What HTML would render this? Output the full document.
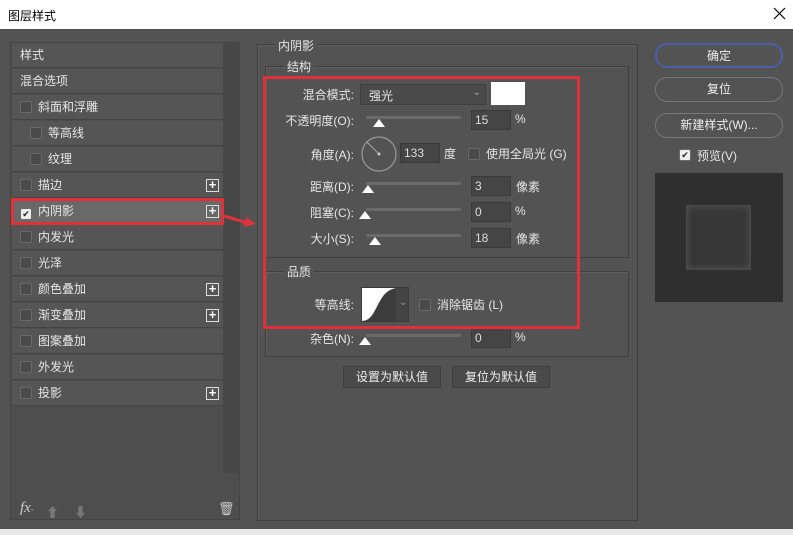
<!DOCTYPE html>
<html><head><meta charset="utf-8"><style>
*{box-sizing:border-box;margin:0;padding:0}
body{width:793px;height:535px;overflow:hidden;background:#535353;font-family:"Liberation Sans","Noto Sans CJK SC",sans-serif;font-size:12px;color:#e6e6e6;position:relative}
.a{position:absolute}
.title{left:0;top:0;width:793px;height:29px;background:#fff;color:#000;font-size:12px;padding:7px 0 0 8px}
.left{left:10px;top:42px;width:230px;height:478px;background:#4e4e4e;border:1px solid #444}
.item{position:absolute;left:1px;width:211px;height:25px;border-bottom:1px solid #444;background:#555;padding-left:8px;line-height:25px}
.cb{display:inline-block;width:12px;height:12px;border:1px solid #6a6a6a;background:#4a4a4a;vertical-align:-2px;margin-right:6px;border-radius:2px}
.plus{position:absolute;right:4px;top:6px;width:13px;height:13px;border:1px solid #ddd;color:#fff;font-size:13px;line-height:10px;text-align:center;font-weight:bold}
.grp{border:1px solid #3f3f3f;box-shadow:1px 1px 0 #5e5e5e inset}
.lbl{position:absolute;text-align:right;width:100px}
.inp{position:absolute;height:20px;width:40px;background:#454545;border:1px solid #3a3a3a;padding:2px 3px;color:#ddd}
.sl{position:absolute;height:3px;width:95px;background:#6a6a6a;border-radius:1px}
.th{position:absolute;width:0;height:0;border-left:6px solid transparent;border-right:6px solid transparent;border-bottom:8px solid #fff}
.btn{position:absolute;height:22px;background:#4a4a4a;border:1px solid #3e3e3e;text-align:center;line-height:20px;color:#eee}
.rb{position:absolute;left:655px;width:128px;height:25px;border:1px solid #777;border-radius:12px;text-align:center;line-height:23px;color:#eee}
</style></head><body>
<div class="a title">图层样式</div>
<svg class="a" style="left:773px;top:7px" width="13" height="13"><path d="M1 1L12 12M12 1L1 12" stroke="#000" stroke-width="1.2"/></svg>
<div class="a left">
<div class="a" style="left:212px;top:0;width:16px;height:430px;background:#474747"></div>
<div class="item" style="top:0">样式</div>
<div class="item" style="top:26px">混合选项</div>
<div class="item" style="top:52px"><span class="cb"></span>斜面和浮雕</div>
<div class="item" style="top:78px;padding-left:18px"><span class="cb"></span>等高线</div>
<div class="item" style="top:104px;padding-left:18px"><span class="cb"></span>纹理</div>
<div class="item" style="top:130px"><span class="cb"></span>描边<span class="plus">+</span></div>
<div class="item" style="top:156px;background:#696969;outline:3px solid #e0313a;outline-offset:-2px"><span class="cb" style="background:#eee;color:#222;font-size:9px;line-height:10px;text-align:center">✔</span>内阴影<span class="plus">+</span></div>
<div class="item" style="top:182px"><span class="cb"></span>内发光</div>
<div class="item" style="top:208px"><span class="cb"></span>光泽</div>
<div class="item" style="top:234px"><span class="cb"></span>颜色叠加<span class="plus">+</span></div>
<div class="item" style="top:260px"><span class="cb"></span>渐变叠加<span class="plus">+</span></div>
<div class="item" style="top:286px"><span class="cb"></span>图案叠加</div>
<div class="item" style="top:312px"><span class="cb"></span>外发光</div>
<div class="item" style="top:338px"><span class="cb"></span>投影<span class="plus">+</span></div>
<div class="a" style="left:9px;top:457px;font-style:italic;font-family:'Liberation Serif',serif;font-size:15px;color:#ccc">fx<span style="font-size:8px">-</span></div>
<div class="a" style="left:35px;top:459px;color:#777;font-size:13px">⬆</div>
<div class="a" style="left:63px;top:459px;color:#777;font-size:13px">⬇</div>
<div class="a" style="left:207px;top:458px;color:#ccc;font-size:13px">🗑</div>
</div>
<svg class="a" style="left:222px;top:212px" width="36" height="16"><path d="M2 4 L26 11" stroke="#e0313a" stroke-width="3"/><path d="M24 5 L34 12 L22 15 Z" fill="#e0313a"/></svg>
<div class="a grp" style="left:257px;top:44px;width:381px;height:477px"></div>
<div class="a" style="left:275px;top:37px;background:#535353;padding:0 3px">内阴影</div>
<div class="a grp" style="left:265px;top:66px;width:364px;height:192px"></div>
<div class="a" style="left:284px;top:58px;background:#535353;padding:0 3px">结构</div>
<div class="a grp" style="left:265px;top:271px;width:364px;height:86px"></div>
<div class="a" style="left:284px;top:263px;background:#535353;padding:0 3px">品质</div>
<div class="lbl" style="left:254px;top:86px">混合模式:</div>
<div class="a" style="left:360px;top:84px;width:126px;height:21px;background:#4a4a4a;border:1px solid #3e3e3e;padding:2px 8px">强光<span style="position:absolute;right:4px;top:2px;color:#aaa;font-size:10px">⌄</span></div>
<div class="a" style="left:491px;top:82px;width:34px;height:23px;background:#fff"></div>
<div class="lbl" style="left:254px;top:112px">不透明度(O):</div>
<div class="sl" style="left:366px;top:116px"></div><div class="th" style="left:373px;top:119px"></div>
<div class="inp" style="left:471px;top:110px">15</div><div class="a" style="left:515px;top:112px">%</div>
<div class="lbl" style="left:254px;top:146px">角度(A):</div>
<svg class="a" style="left:360px;top:135px" width="38" height="38"><circle cx="19" cy="19" r="17" fill="none" stroke="#9a9a9a" stroke-width="1.2"/><path d="M19 19 L7 7" stroke="#aaa"/><circle cx="19" cy="19" r="1.5" fill="#ccc"/></svg>
<div class="inp" style="left:400px;top:143px">133</div>
<div class="a" style="left:444px;top:145px">度</div>
<span class="cb a" style="left:468px;top:148px"></span>
<div class="a" style="left:486px;top:145px">使用全局光 (G)</div>
<div class="lbl" style="left:254px;top:178px">距离(D):</div>
<div class="sl" style="left:366px;top:182px"></div><div class="th" style="left:362px;top:185px"></div>
<div class="inp" style="left:471px;top:176px">3</div><div class="a" style="left:516px;top:178px">像素</div>
<div class="lbl" style="left:254px;top:204px">阻塞(C):</div>
<div class="sl" style="left:366px;top:208px"></div><div class="th" style="left:359px;top:211px"></div>
<div class="inp" style="left:471px;top:202px">0</div><div class="a" style="left:515px;top:204px">%</div>
<div class="lbl" style="left:254px;top:230px">大小(S):</div>
<div class="sl" style="left:366px;top:234px"></div><div class="th" style="left:369px;top:237px"></div>
<div class="inp" style="left:471px;top:228px">18</div><div class="a" style="left:516px;top:230px">像素</div>
<div class="lbl" style="left:254px;top:296px">等高线:</div>
<div class="a" style="left:361px;top:287px;width:48px;height:35px;background:#444;border:1px solid #3a3a3a"></div>
<svg class="a" style="left:362px;top:288px" width="34" height="33"><rect width="34" height="33" fill="#3c3c3c"/><path d="M0 33 C16 33 14 3 34 0 L0 0 Z" fill="#fff"/></svg>
<div class="a" style="left:399px;top:297px;color:#999;font-size:10px">⌄</div>
<span class="cb a" style="left:419px;top:299px"></span>
<div class="a" style="left:437px;top:296px">消除锯齿 (L)</div>
<div class="lbl" style="left:254px;top:330px">杂色(N):</div>
<div class="sl" style="left:366px;top:334px"></div><div class="th" style="left:359px;top:337px"></div>
<div class="inp" style="left:471px;top:328px">0</div><div class="a" style="left:515px;top:330px">%</div>
<div class="a" style="left:263px;top:76px;width:317px;height:253px;border:3px solid #e0313a"></div>
<div class="btn" style="left:343px;top:366px;width:98px">设置为默认值</div>
<div class="btn" style="left:452px;top:366px;width:98px">复位为默认值</div>
<div class="rb" style="top:43px;border-color:#4a5fa8;border-width:2px">确定</div>
<div class="rb" style="top:77px">复位</div>
<div class="rb" style="top:113px">新建样式(W)...</div>
<span class="cb a" style="left:679px;top:149px;background:#eee;color:#222;font-size:9px;line-height:10px;text-align:center">✔</span>
<div class="a" style="left:697px;top:147px">预览(V)</div>
<div class="a" style="left:655px;top:173px;width:128px;height:129px;background:#2f2f2f"></div>
<div class="a" style="left:686px;top:205px;width:65px;height:65px;background:#363636;box-shadow:inset 0 0 8px #555;border:1px solid #4a4a4a"></div>
<div class="a" style="left:0;top:529px;width:793px;height:6px;background:#e8e8e8"></div>
</body></html>
